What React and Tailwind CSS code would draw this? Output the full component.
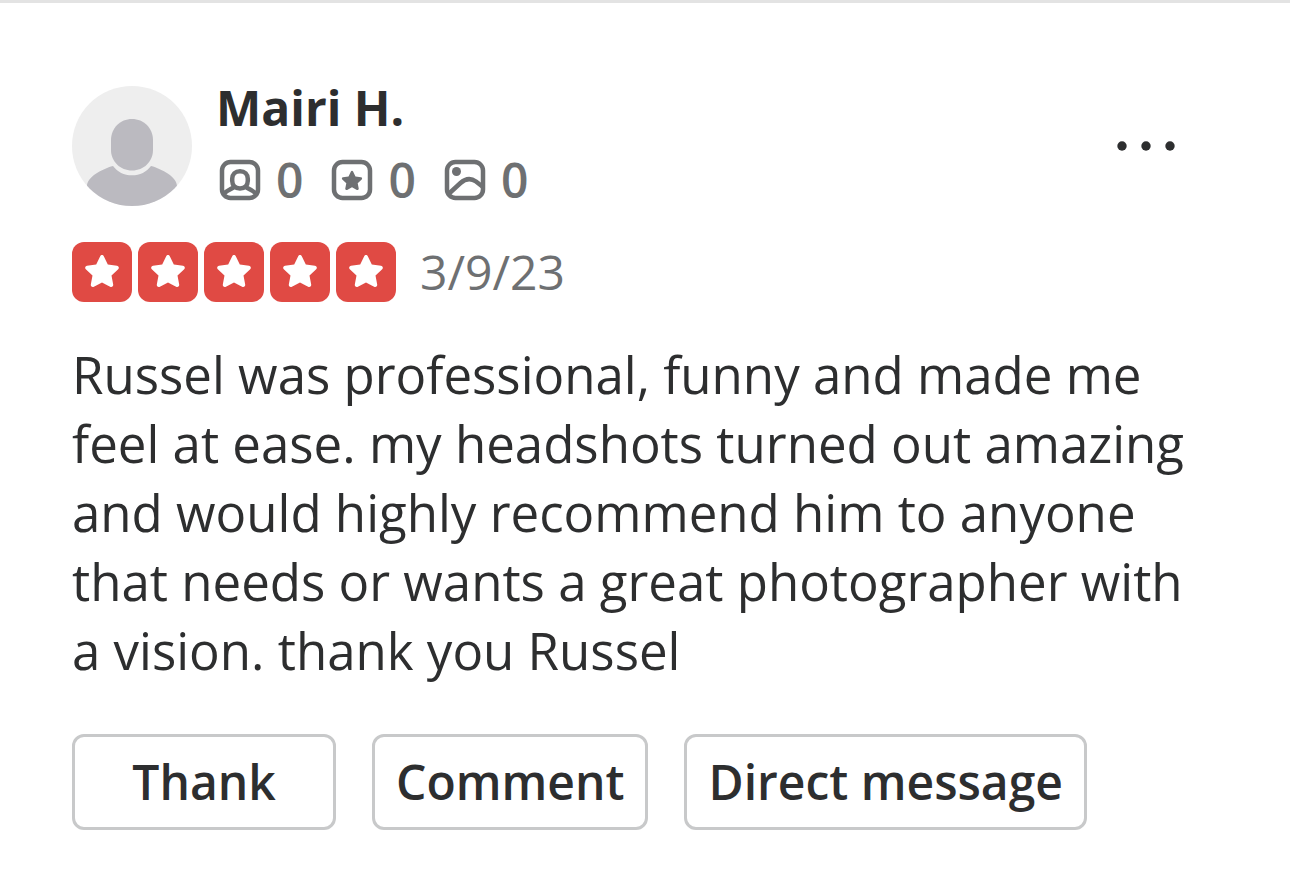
import React from "react";

const STAR_PATH =
  "M28.2 14.2c.7-1.6 2.9-1.6 3.6 0l4 8.4 9.2 1.2c1.8.2 2.5 2.3 1.2 3.5l-6.7 6.3 1.7 9c.3 1.8-1.5 3.1-3.1 2.2L30 40.4l-8.1 4.4c-1.6.9-3.4-.4-3.1-2.2l1.7-9-6.7-6.3c-1.3-1.2-.6-3.3 1.2-3.5l9.2-1.2z";

const Avatar = () => (
  <svg className="size-[120px] shrink-0" viewBox="0 0 120 120" role="img" aria-label="Mairi H.">
    <defs>
      <clipPath id="avatar-circle">
        <circle cx="60" cy="60" r="60" />
      </clipPath>
    </defs>
    <circle cx="60" cy="60" r="60" fill="#eeeeee" />
    <g clipPath="url(#avatar-circle)" fill="#bbbac0">
      <path d="M60 33c11.8 0 21 9.2 21 21v10c0 11.500-9.200 20.500-21 20.500S39 75.500 39 64V54c0-11.800 9.200-21 21-21z" />
      <path d="M41 80c4.500 6 11 9.300 19 9.300S74.500 86 79 80c11 3 26 11 26 20v20H15v-20c0-9 15-17 26-20z" />
    </g>
  </svg>
);

const FriendsIcon = () => (
  <svg className="size-12" viewBox="0 0 48 48" fill="none" stroke="currentColor" strokeWidth="4.500" aria-hidden="true">
    <rect x="6" y="6" width="36" height="36" rx="8.500" />
    <path d="M24 15.200c4.700 0 7.800 3.300 7.800 7.600v2c0 4.500-3.100 7.700-7.800 7.700s-7.800-3.200-7.800-7.700v-2c0-4.300 3.100-7.600 7.800-7.600z" />
    <path d="M7.500 38.500c1.800-3 5.200-4.700 10.500-7.300M40.500 38.500c-1.800-3-5.200-4.700-10.500-7.300" />
  </svg>
);

const ReviewsIcon = () => (
  <svg className="size-12" viewBox="0 0 48 48" fill="none" aria-hidden="true">
    <rect x="6" y="6" width="36" height="36" rx="8.500" stroke="currentColor" strokeWidth="4.500" />
    <path transform="translate(6 7) scale(.6)" d={STAR_PATH} fill="currentColor" />
  </svg>
);

const PhotosIcon = () => (
  <svg className="size-12" viewBox="0 0 48 48" fill="none" stroke="currentColor" strokeWidth="4.500" aria-hidden="true">
    <rect x="6" y="6" width="36" height="36" rx="8.500" />
    <circle cx="15.500" cy="15.500" r="4.500" fill="currentColor" stroke="none" />
    <path d="M7 38.500L19.500 27c5.500-5 10.500-5 15.500-1.500l7 5.500" />
  </svg>
);

const stats = [
  { label: "Friends", value: 0, Icon: FriendsIcon },
  { label: "Reviews", value: 0, Icon: ReviewsIcon },
  { label: "Photos", value: 0, Icon: PhotosIcon },
];

const actions = ["Thank", "Comment", "Direct message"];

const Rating = () => (
  <div className="flex gap-1.5" role="img" aria-label="5 star rating">
    {[1, 2, 3, 4, 5].map((n) => (
      <svg key={n} className="size-[60px]" viewBox="0 0 60 60">
        <rect width="60" height="60" rx="12" fill="#e04a44" />
        <path d={STAR_PATH} fill="#ffffff" />
      </svg>
    ))}
  </div>
);

export default function App() {
  return (
    <main className="min-h-screen border-t-3 border-[#e3e3e3] bg-white font-['Open_Sans',sans-serif] text-[#2d2e2f]">
      <article className="pt-[81px] pr-24 pb-12 pl-[72px]">
        <header className="flex items-end gap-6">
          <Avatar />
          <div className="flex flex-col gap-6 pb-0.5">
            <h2 className="text-[48px] leading-12 font-bold">Mairi H.</h2>
            <ul className="flex gap-[25px] text-[#6e7072]">
              {stats.map(({ label, value, Icon }) => (
                <li key={label} className="flex items-center gap-3" title={label}>
                  <Icon />
                  <span className="text-[48px] leading-12 font-semibold">{value}</span>
                </li>
              ))}
            </ul>
          </div>
          <button type="button" aria-label="More options" className="ml-auto flex h-[120px] w-24 items-center justify-center">
            <svg className="h-3 w-15" viewBox="0 0 60 12" fill="currentColor" aria-hidden="true">
              <circle cx="6" cy="6" r="4.700" />
              <circle cx="30" cy="6" r="4.700" />
              <circle cx="54" cy="6" r="4.700" />
            </svg>
          </button>
        </header>

        <div className="mt-9 flex items-center gap-6">
          <Rating />
          <time dateTime="2023-03-09" className="text-[48px] leading-12 text-[#6e7072]">
            3/9/23
          </time>
        </div>

        <p className="mt-[38px] text-[51px] leading-[69px]">
          Russel was professional, funny and made me feel at ease. my headshots turned out amazing and would highly
          recommend him to anyone that needs or wants a great photographer with a vision. thank you Russel
        </p>

        <div className="mt-[49px] flex flex-wrap gap-9">
          {actions.map((label) => (
            <button
              key={label}
              type="button"
              className="h-24 min-w-[264px] rounded-xl border-3 border-[#c8c9ca] px-[21px] text-[48px] leading-12 font-semibold"
            >
              {label}
            </button>
          ))}
        </div>
      </article>
    </main>
  );
}
